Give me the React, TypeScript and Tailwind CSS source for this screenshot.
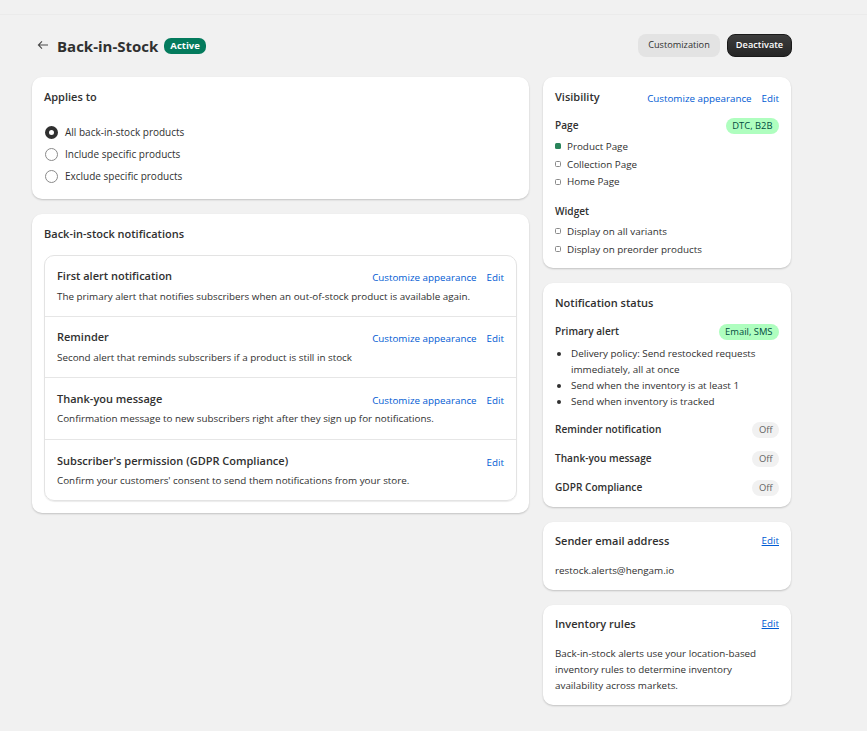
const font = { fontFamily: '"Open Sans", sans-serif' };

function Card({ children, className = '' }: { children: React.ReactNode; className?: string }) {
  return (
    <div className={`bg-white rounded-[10px] shadow-[0_1px_2px_rgba(0,0,0,0.2)] ${className}`}>
      {children}
    </div>
  );
}

function Radio({ label, checked }: { label: string; checked?: boolean }) {
  return (
    <div className="flex items-center h-[22px] pl-[1px]">
      {checked ? (
        <span className="w-[13px] h-[13px] rounded-full border-[4px] border-[#303030] bg-white" />
      ) : (
        <span className="w-[13px] h-[13px] rounded-full border border-[#8a8a8a] bg-white" />
      )}
      <span className="ml-[7px] text-[#303030] text-[10px]">{label}</span>
    </div>
  );
}

function Links({ customize = true, underline = false }: { customize?: boolean; underline?: boolean }) {
  return (
    <div className={`flex items-center gap-[10px] text-[9.8px] text-[#005bd3] ${underline ? '' : 'pt-[4px]'}`}>
      {customize && <span>Customize appearance</span>}
      <span className={underline ? 'underline' : ''}>Edit</span>
    </div>
  );
}

function AlertRow({ title, text, customize = true, className = '', textClass = 'mt-[3px]' }: { title: string; text: string; customize?: boolean; className?: string; textClass?: string }) {
  return (
    <div className={`px-[12px] ${className}`}>
      <div className="flex items-center justify-between h-[18px]">
        <span className="text-[11px] font-semibold text-[#303030]">{title}</span>
        <Links customize={customize} />
      </div>
      <p className={`text-[9.86px] leading-[16px] text-[#303030] ${textClass}`}>{text}</p>
    </div>
  );
}

function Check({ label, on, className = '' }: { label: string; on?: boolean; className?: string }) {
  return (
    <div className={`flex items-center text-[9.85px] text-[#303030] ${className}`}>
      <span className={`w-[6px] h-[6px] rounded-[1.5px] ${on ? 'bg-[#29845a]' : 'border border-[#8a8a8a]'}`} />
      <span className="ml-[6px]">{label}</span>
    </div>
  );
}

function Pill({ children, tone }: { children: React.ReactNode; tone: 'green' | 'gray' }) {
  return (
    <span className={`h-[16px] px-[6.5px] rounded-full flex items-center text-[9.4px] ${tone === 'green' ? 'bg-[#affebf] text-[#014b40]' : 'bg-[#f1f1f1] text-[#616161]'}`}>
      {children}
    </span>
  );
}

function StatusRow({ label }: { label: string }) {
  return (
    <div className="flex items-center justify-between h-[16px] mt-[13px]">
      <span className="text-[10.1px] font-semibold text-[#303030]">{label}</span>
      <Pill tone="gray">Off</Pill>
    </div>
  );
}

export default function App() {
  return (
    <div style={font} className="min-h-[731px] bg-[#f1f1f1] overflow-hidden">
      <div className="h-[15px] border-b border-[#ebebeb]" />
      <div className="w-[760px] ml-[32px]">
        <div className="flex items-center justify-between h-[62px] pb-[2px]">
          <div className="flex items-center ml-[5px]">
            <svg width="12" height="12" viewBox="0 0 12 12" fill="none" stroke="#4a4a4a" strokeWidth="1.1">
              <path d="M11 6H1.5M5 2.4 1.4 6 5 9.6" />
            </svg>
            <span className="ml-[8px] pt-[3px] text-[15px] font-bold text-[#303030]">Back-in-Stock</span>
            <span className="ml-[6px] mt-[2px] h-[16px] px-[6px] rounded-[7px] bg-[#047b5d] text-white text-[9.5px] font-bold flex items-center">Active</span>
          </div>
          <div className="flex items-center gap-[7px]">
            <button className="h-[23px] w-[82px] rounded-[8px] bg-[#e3e3e3] text-[9.2px] font-medium text-[#303030]">Customization</button>
            <button className="h-[23px] w-[65px] rounded-[8px] bg-linear-to-b from-[#3d3d3d] to-[#262626] border border-[#1a1a1a] text-[9.2px] font-semibold text-white">Deactivate</button>
          </div>
        </div>
        <div className="flex items-start gap-[14px]">
          <div className="w-[497px] flex flex-col gap-[15px]">
            <Card className="h-[122px] px-[12px] pt-[12px]">
              <h2 className="text-[11px] leading-[16px] font-semibold text-[#303030]">Applies to</h2>
              <div className="mt-[16px]">
                <Radio label="All back-in-stock products" checked />
                <Radio label="Include specific products" />
                <Radio label="Exclude specific products" />
              </div>
            </Card>
            <Card className="h-[299px] px-[12px] pt-[12px]">
              <h2 className="text-[11px] leading-[16px] font-semibold text-[#303030]">Back-in-stock notifications</h2>
              <div className="mt-[13px] rounded-[10px] border border-[#e3e3e3] shadow-[0_1px_1px_rgba(0,0,0,0.08)]">
                <AlertRow className="h-[61px] pt-[11px] border-b border-[#e6e6e6]" title="First alert notification" text="The primary alert that notifies subscribers when an out-of-stock product is available again." />
                <AlertRow className="h-[61px] pt-[11px] border-b border-[#e6e6e6]" title="Reminder" text="Second alert that reminds subscribers if a product is still in stock" />
                <AlertRow className="h-[62px] pt-[12px] border-b border-[#e6e6e6]" textClass="mt-[2px]" title="Thank-you message" text="Confirmation message to new subscribers right after they sign up for notifications." />
                <AlertRow className="h-[60px] pt-[12px]" textClass="mt-[2px]" title="Subscriber's permission (GDPR Compliance)" text="Confirm your customers' consent to send them notifications from your store." customize={false} />
              </div>
            </Card>
          </div>
          <div className="w-[248px] flex flex-col gap-[15px]">
            <Card className="h-[191px] px-[12px] pt-[12px]">
              <div className="flex items-center justify-between h-[16px]">
                <h2 className="text-[11px] font-semibold text-[#303030]">Visibility</h2>
                <Links />
              </div>
              <div className="flex items-center justify-between h-[16px] mt-[13px]">
                <span className="text-[10.1px] font-semibold text-[#303030]">Page</span>
                <Pill tone="green">DTC, B2B</Pill>
              </div>
              <div className="mt-[3px]">
                <Check label="Product Page" on className="h-[18px]" />
                <Check label="Collection Page" className="h-[18px]" />
                <Check label="Home Page" className="h-[17px]" />
              </div>
              <div className="text-[10.1px] leading-[16px] font-semibold text-[#303030] mt-[13px]">Widget</div>
              <div className="mt-[3px]">
                <Check label="Display on all variants" className="h-[18px]" />
                <Check label="Display on preorder products" className="h-[18px]" />
              </div>
            </Card>
            <Card className="h-[224px] px-[12px] pt-[12px]">
              <h2 className="text-[11px] leading-[16px] font-semibold text-[#303030]">Notification status</h2>
              <div className="flex items-center justify-between h-[16px] mt-[13px]">
                <span className="text-[10.1px] font-semibold text-[#303030]">Primary alert</span>
                <Pill tone="green">Email, SMS</Pill>
              </div>
              <ul className="mt-[5px] ml-[16px] list-disc text-[9.85px] leading-[16px] text-[#303030]">
                <li>Delivery policy: Send restocked requests immediately, all at once</li>
                <li>Send when the inventory is at least 1</li>
                <li>Send when inventory is tracked</li>
              </ul>
              <StatusRow label="Reminder notification" />
              <StatusRow label="Thank-you message" />
              <StatusRow label="GDPR Compliance" />
            </Card>
            <Card className="h-[68px] px-[12px] pt-[11px]">
              <div className="flex items-center justify-between h-[16px]">
                <h2 className="text-[11px] font-semibold text-[#303030]">Sender email address</h2>
                <Links customize={false} underline />
              </div>
              <p className="mt-[13px] text-[9.85px] leading-[16px] text-[#303030]">restock.alerts@hengam.io</p>
            </Card>
            <Card className="h-[100px] px-[12px] pt-[11px]">
              <div className="flex items-center justify-between h-[16px]">
                <h2 className="text-[11px] font-semibold text-[#303030]">Inventory rules</h2>
                <Links customize={false} underline />
              </div>
              <p className="mt-[13px] text-[9.85px] leading-[16px] text-[#303030]">Back-in-stock alerts use your location-based inventory rules to determine inventory availability across markets.</p>
            </Card>
          </div>
        </div>
      </div>
    </div>
  );
}
